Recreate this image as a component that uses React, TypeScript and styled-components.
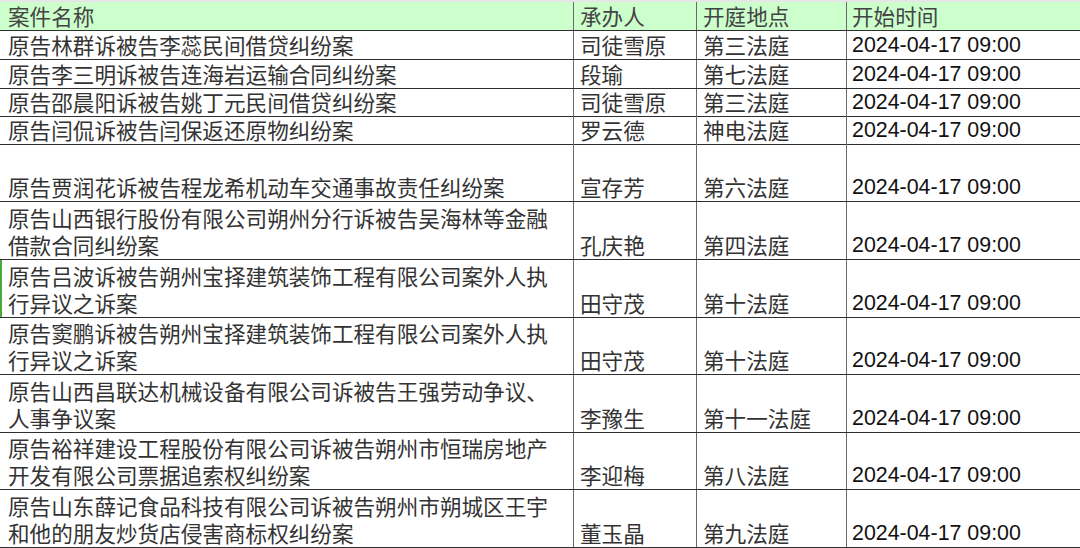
import React from 'react';
import styled, { createGlobalStyle } from 'styled-components';

type Hearing = {
  title: string[];
  judge: string;
  court: string;
  time: string;
  height: number;
  marked?: boolean;
};

const TIME = '2024-04-17 09:00';

const rows: Hearing[] = [
  { title: ['原告林群诉被告李蕊民间借贷纠纷案'], judge: '司徒雪原', court: '第三法庭', time: TIME, height: 29 },
  { title: ['原告李三明诉被告连海岩运输合同纠纷案'], judge: '段瑜', court: '第七法庭', time: TIME, height: 29 },
  { title: ['原告邵晨阳诉被告姚丁元民间借贷纠纷案'], judge: '司徒雪原', court: '第三法庭', time: TIME, height: 28 },
  { title: ['原告闫侃诉被告闫保返还原物纠纷案'], judge: '罗云德', court: '神电法庭', time: TIME, height: 28 },
  { title: ['原告贾润花诉被告程龙希机动车交通事故责任纠纷案'], judge: '宣存芳', court: '第六法庭', time: TIME, height: 57 },
  {
    title: ['原告山西银行股份有限公司朔州分行诉被告吴海林等金融', '借款合同纠纷案'],
    judge: '孔庆艳',
    court: '第四法庭',
    time: TIME,
    height: 58,
  },
  {
    title: ['原告吕波诉被告朔州宝择建筑装饰工程有限公司案外人执', '行异议之诉案'],
    judge: '田守茂',
    court: '第十法庭',
    time: TIME,
    height: 58,
    marked: true,
  },
  {
    title: ['原告窦鹏诉被告朔州宝择建筑装饰工程有限公司案外人执', '行异议之诉案'],
    judge: '田守茂',
    court: '第十法庭',
    time: TIME,
    height: 57,
  },
  {
    title: ['原告山西昌联达机械设备有限公司诉被告王强劳动争议、', '人事争议案'],
    judge: '李豫生',
    court: '第十一法庭',
    time: TIME,
    height: 58,
  },
  {
    title: ['原告裕祥建设工程股份有限公司诉被告朔州市恒瑞房地产', '开发有限公司票据追索权纠纷案'],
    judge: '李迎梅',
    court: '第八法庭',
    time: TIME,
    height: 57,
  },
  {
    title: ['原告山东薛记食品科技有限公司诉被告朔州市朔城区王宇', '和他的朋友炒货店侵害商标权纠纷案'],
    judge: '董玉晶',
    court: '第九法庭',
    time: TIME,
    height: 58,
  },
];

const GlobalStyle = createGlobalStyle`
  html, body {
    margin: 0;
    padding: 0;
    background: #ffffff;
    overflow: hidden;
  }
`;

const Sheet = styled.div`
  width: 1080px;
  height: 548px;
  overflow: hidden;
  border-top: 2px solid #e6e6e6;
  font-family: "Noto Sans CJK SC", "Liberation Sans", sans-serif;
  font-size: 21.6px;
  color: #333333;
`;

const Row = styled.div<{ $h: number; $head?: boolean; $marked?: boolean }>`
  display: grid;
  grid-template-columns: 574px 123px 150px 1fr;
  height: ${(p) => p.$h}px;
  box-sizing: border-box;
  border-bottom: 1.5px solid #2f2f2f;
  background: ${(p) => (p.$head ? '#ccffcc' : '#ffffff')};
  box-shadow: ${(p) => (p.$marked ? 'inset 2px 0 0 #4aa83c' : 'none')};
`;

const Cell = styled.div<{ $pad?: number; $head?: boolean }>`
  display: flex;
  flex-direction: column;
  justify-content: flex-end;
  min-width: 0;
  padding: 0 0 1px ${(p) => p.$pad ?? 6}px;
  border-right: 1px solid #6a6a6a;
  line-height: 26.5px;
  white-space: nowrap;
  color: ${(p) => (p.$head ? '#444444' : '#333333')};

  &:last-child {
    border-right: none;
  }
`;

const TimeText = styled.span`
  font-family: "Liberation Sans", Arial, sans-serif;
  font-size: 21.4px;
  color: #111111;
`;

export default function App() {
  return (
    <>
      <GlobalStyle />
      <Sheet>
        <Row $h={29} $head>
          <Cell $pad={8} $head>案件名称</Cell>
          <Cell $head>承办人</Cell>
          <Cell $head>开庭地点</Cell>
          <Cell $pad={5} $head>开始时间</Cell>
        </Row>
        {rows.map((r, i) => (
          <Row key={i} $h={r.height} $marked={r.marked}>
            <Cell $pad={8}>
              {r.title.map((line) => (
                <span key={line}>{line}</span>
              ))}
            </Cell>
            <Cell>{r.judge}</Cell>
            <Cell>{r.court}</Cell>
            <Cell $pad={5}>
              <TimeText>{r.time}</TimeText>
            </Cell>
          </Row>
        ))}
      </Sheet>
    </>
  );
}
